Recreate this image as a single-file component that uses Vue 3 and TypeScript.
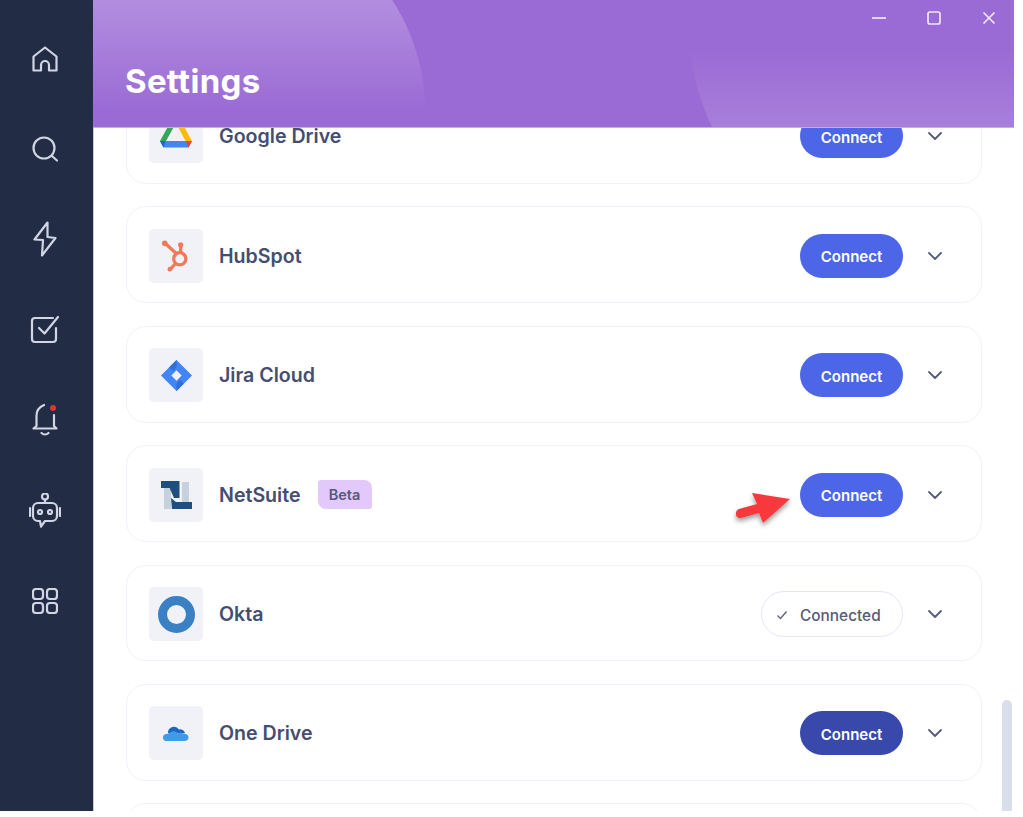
<script setup lang="ts">
interface Row { name: string; icon: string; beta?: boolean; connected?: boolean; dark?: boolean }
const rows: Row[] = [
  { name: 'Google Drive', icon: 'gdrive' },
  { name: 'HubSpot', icon: 'hubspot' },
  { name: 'Jira Cloud', icon: 'jira' },
  { name: 'NetSuite', icon: 'netsuite', beta: true },
  { name: 'Okta', icon: 'okta', connected: true },
  { name: 'One Drive', icon: 'onedrive', dark: true },
  { name: '', icon: '' },
]
</script>

<template>
  <div class="window">
    <aside class="side">
      <div class="slot"><svg class="nav" width="26" height="26" viewBox="0 0 26 26"><path d="M1.500 10.500 13 1.500l11.500 9V24.500H17v-5.500a4 4 0 0 0-8 0v5.500H1.500z" /></svg></div>
      <div class="slot"><svg class="nav" width="26" height="26" viewBox="0 0 26 26"><circle cx="12" cy="12" r="10.500" /><path d="m20 20 5 4.500" /></svg></div>
      <div class="slot"><svg class="nav" width="24" height="36" viewBox="0 0 24 36"><path d="M14.500 1.500 1.500 18.500l8.500.5-1 15.500L22.500 17l-8-1z" /></svg></div>
      <div class="slot"><svg class="nav" width="30" height="30" viewBox="0 0 30 30"><path d="M26 13v11a3 3 0 0 1-3 3H5a3 3 0 0 1-3-3V6a3 3 0 0 1 3-3h18" /><path d="m9 13 5.500 5.500L28 2" /></svg></div>
      <div class="slot"><svg class="nav" width="26" height="34" viewBox="0 0 26 34"><path d="M12 2C7 4 4.500 8 4.500 13v10L1.500 25.500h23l-2.500-2.500V12" /><path d="M9.500 30c2 2 5 2 7 0" /><circle class="dot" cx="21" cy="5" r="3" /></svg></div>
      <div class="slot"><svg class="nav" width="32" height="35" viewBox="0 0 32 35"><circle cx="16" cy="3.500" r="3" /><path d="M16 6.500V10" /><path d="M9 10h14a5 5 0 0 1 5 5v8a5 5 0 0 1-5 5h-7l-4 5.500-1-5.500H9a5 5 0 0 1-5-5v-8a5 5 0 0 1 5-5z" /><circle cx="11" cy="19" r="2" /><circle cx="21" cy="19" r="2" /><path d="M1 15v8M31 15v8" /></svg></div>
      <div class="slot"><svg class="nav" width="26" height="26" viewBox="0 0 26 26"><rect x="1" y="1" width="10" height="10" rx="3" /><rect x="15" y="1" width="10" height="10" rx="3" /><rect x="1" y="15" width="10" height="10" rx="3" /><rect x="15" y="15" width="10" height="10" rx="3" /></svg></div>
    </aside>

    <main class="main">
      <header class="head">
        <div class="blob-a"></div>
        <div class="blob-b"></div>
        <h1>Settings</h1>
        <div class="winbtns">
          <svg viewBox="0 0 16 16" width="16" height="16"><path d="M1 8h14" /></svg>
          <svg viewBox="0 0 16 16" width="16" height="16"><rect x="2" y="2" width="12" height="12" rx="2" /></svg>
          <svg viewBox="0 0 16 16" width="16" height="16"><path d="m2.500 2.500 11 11M13.500 2.500l-11 11" /></svg>
        </div>
      </header>

      <section class="body">
        <div class="list">
          <div v-for="r in rows" :key="r.name" class="row">
            <template v-if="r.name">
              <div class="tile">
                <svg v-if="r.icon === 'gdrive'" viewBox="0 0 32 28" width="32" height="28">
                  <path fill="#34a853" d="M10.500 0h6L6 19 0 19z" />
                  <path fill="#fbbc04" d="M15.500 0h6L32 19h-6.500z" />
                  <path fill="#4285f4" d="M5.500 19H32l-3.500 6.500H3.500L0 19z" />
                  <path fill="#ea4335" d="M26 19h6l-3.500 6.500z" />
                  <path fill="#1967d2" d="M0 19h5.500l-2 6.500z" />
                </svg>
                <svg v-else-if="r.icon === 'hubspot'" viewBox="0 0 32 34" width="30" height="32">
                  <g fill="none" stroke="#f0795a" stroke-width="3.500">
                    <circle cx="20" cy="20" r="6.500" />
                    <path d="M5 4l11 10M21 6v7M15.500 25l-5.500 6" />
                  </g>
                  <circle cx="4" cy="3.500" r="3" fill="#f0795a" />
                  <circle cx="21" cy="5" r="2.800" fill="#f0795a" />
                  <circle cx="9.500" cy="31" r="2.500" fill="#f0795a" />
                </svg>
                <svg v-else-if="r.icon === 'jira'" viewBox="0 0 34 34" width="33" height="31">
                  <path fill="#4285f4" d="M17 0 34 17 17 34 0 17z" />
                  <path fill="#2f6fd8" d="M17 0 9 8l4 4 4-4z M17 34l8-8-4-4-4 4z" />
                  <rect x="13" y="13" width="8" height="8" fill="#f0f2f8" transform="rotate(45 17 17)" />
                </svg>
                <svg v-else-if="r.icon === 'netsuite'" viewBox="0 0 31 28" width="31" height="28">
                  <path fill="#c6d1de" d="M3 6h7v22H3zM21 1h7v20h-7z" />
                  <path fill="#1f4f7f" d="M0 0h18.500v17h-5.500L9 8V7H0zM10 17l5 4h16v7H11z" />
                </svg>
                <svg v-else-if="r.icon === 'okta'" viewBox="0 0 37 37" width="37" height="37">
                  <circle cx="18.500" cy="18.500" r="14" fill="none" stroke="#3a80c4" stroke-width="9" />
                </svg>
                <svg v-else-if="r.icon === 'onedrive'" viewBox="0 0 26 16" width="26" height="16">
                  <path fill="#1f66c4" d="M5 8a6 6 0 0 1 11-3.500A5 5 0 0 1 22 8z" />
                  <path fill="#3f9be8" d="M3.500 16a3.500 3.500 0 0 1 0-7c2-.2 3-1 4.500-2 2-1.200 5-.7 6.500 1.200 1.500-.8 3.500-.8 5 0 3.500.3 6 1.500 6 4 0 2.500-1.500 3.800-4 3.800z" />
                </svg>
              </div>
              <span class="name">{{ r.name }}</span>
              <span v-if="r.beta" class="beta">Beta</span>
              <div class="spacer"></div>
              <div v-if="r.connected" class="connected">
                <svg viewBox="0 0 12 12" width="12" height="12"><path d="m1.500 6.500 3 3 6-7" /></svg>
                <span>Connected</span>
              </div>
              <button v-else class="connect" :class="{ dark: r.dark }">Connect</button>
              <svg class="chev" viewBox="0 0 14 8" width="14" height="8"><path d="m1 1 6 6 6-6" /></svg>
            </template>
          </div>
        </div>
        <div class="scrollbar"></div>
        <svg class="arrow" viewBox="0 0 66 44" width="66" height="44">
          <defs>
            <filter id="as" x="-30%" y="-30%" width="160%" height="170%"><feDropShadow dx="0" dy="3" stdDeviation="2.500" flood-color="#000" flood-opacity=".4" /></filter>
          </defs>
          <path filter="url(#as)" fill="#f9383c" d="M20 2 58 8 31 32 27 22 9 27C3 28 2 20 7 18L25 13z" />
        </svg>
      </section>
    </main>
  </div>
</template>

<style>
html, body { margin: 0; background: #fff; }
</style>

<style scoped>
.window { display: flex; width: 1014px; height: 811px; overflow: hidden; font-family: Inter, "Noto Sans", sans-serif; }
.side { width: 93px; flex: none; background: #222c45; display: flex; flex-direction: column; padding-top: 13.500px; box-sizing: border-box; }
.slot { height: 90.400px; flex: none; display: flex; align-items: center; justify-content: center; padding-right: 3px; box-sizing: border-box; }
.nav { display: block; fill: none; stroke: #d2d6e4; stroke-width: 2.200; stroke-linejoin: round; stroke-linecap: round; }
.dot { fill: #e2352f; stroke: none; }
.main { flex: 1; display: flex; flex-direction: column; min-width: 0; }
.head { position: relative; height: 127px; flex: none; overflow: hidden; background: #9b6bd5; border-bottom: 1px solid #c8a9ea; z-index: 2; }
.blob-a { position: absolute; left: -68px; top: -90px; width: 400px; height: 400px; border-radius: 50%; background: linear-gradient(180deg, rgba(255,255,255,.24) 22%, rgba(255,255,255,0) 50%); }
.blob-b { position: absolute; left: 595px; top: -230px; width: 500px; height: 500px; border-radius: 50%; background: linear-gradient(180deg, rgba(255,255,255,0) 56%, rgba(255,255,255,.13) 71%); }
h1 { position: absolute; left: 32px; top: 62px; margin: 0; color: #fff; font-size: 33px; line-height: 38px; font-weight: 700; letter-spacing: .3px; }
.winbtns { position: absolute; right: 17px; top: 10px; display: flex; gap: 39px; }
.winbtns svg { fill: none; stroke: #f1e8fb; stroke-width: 1.700; }
.body { position: relative; flex: 1; min-height: 0; overflow: hidden; border-left: 1px solid #c9ccd8; }
.list { display: flex; flex-direction: column; gap: 22.500px; margin: -41px 32px 0 32px; }
.row { height: 96.900px; flex: none; box-sizing: border-box; border: 1.500px solid #f1f2fb; border-radius: 20px; display: flex; align-items: center; padding: 2px 39px 0 22px; background: #fff; }
.tile { width: 54px; height: 54px; flex: none; border-radius: 5px; background: #f0f2f8; display: flex; align-items: center; justify-content: center; }
.name { margin-left: 16px; font-size: 19.600px; font-weight: 600; color: #454d71; }
.beta { margin-left: 17px; width: 54px; height: 29px; background: #e3c9fb; border-radius: 3px 8px 3px 8px; color: #56587c; font-size: 14.500px; font-weight: 600; display: flex; align-items: center; justify-content: center; }
.spacer { flex: 1; }
.connect { width: 103px; height: 44px; border: none; border-radius: 22px; background: #4d66e8; color: #fff; font-family: inherit; font-size: 15px; font-weight: 600; padding: 2px 0 0; }
.connect.dark { background: #3849ab; }
.connected { width: 142px; height: 46px; box-sizing: border-box; border: 1.500px solid #e2e5fa; border-radius: 23px; display: flex; align-items: center; padding: 2px 0 0 14px; gap: 12px; color: #565b79; font-size: 15.400px; font-weight: 500; }
.connected svg { fill: none; stroke: #5a6080; stroke-width: 1.300; }
.chev { margin-left: 25px; fill: none; stroke: #565d78; stroke-width: 1.800; stroke-linecap: round; stroke-linejoin: round; }
.scrollbar { position: absolute; right: 2px; top: 572px; width: 10px; height: 140px; border-radius: 5px 5px 0 0; background: #d8deea; }
.arrow { position: absolute; left: 638px; top: 363px; }
</style>
